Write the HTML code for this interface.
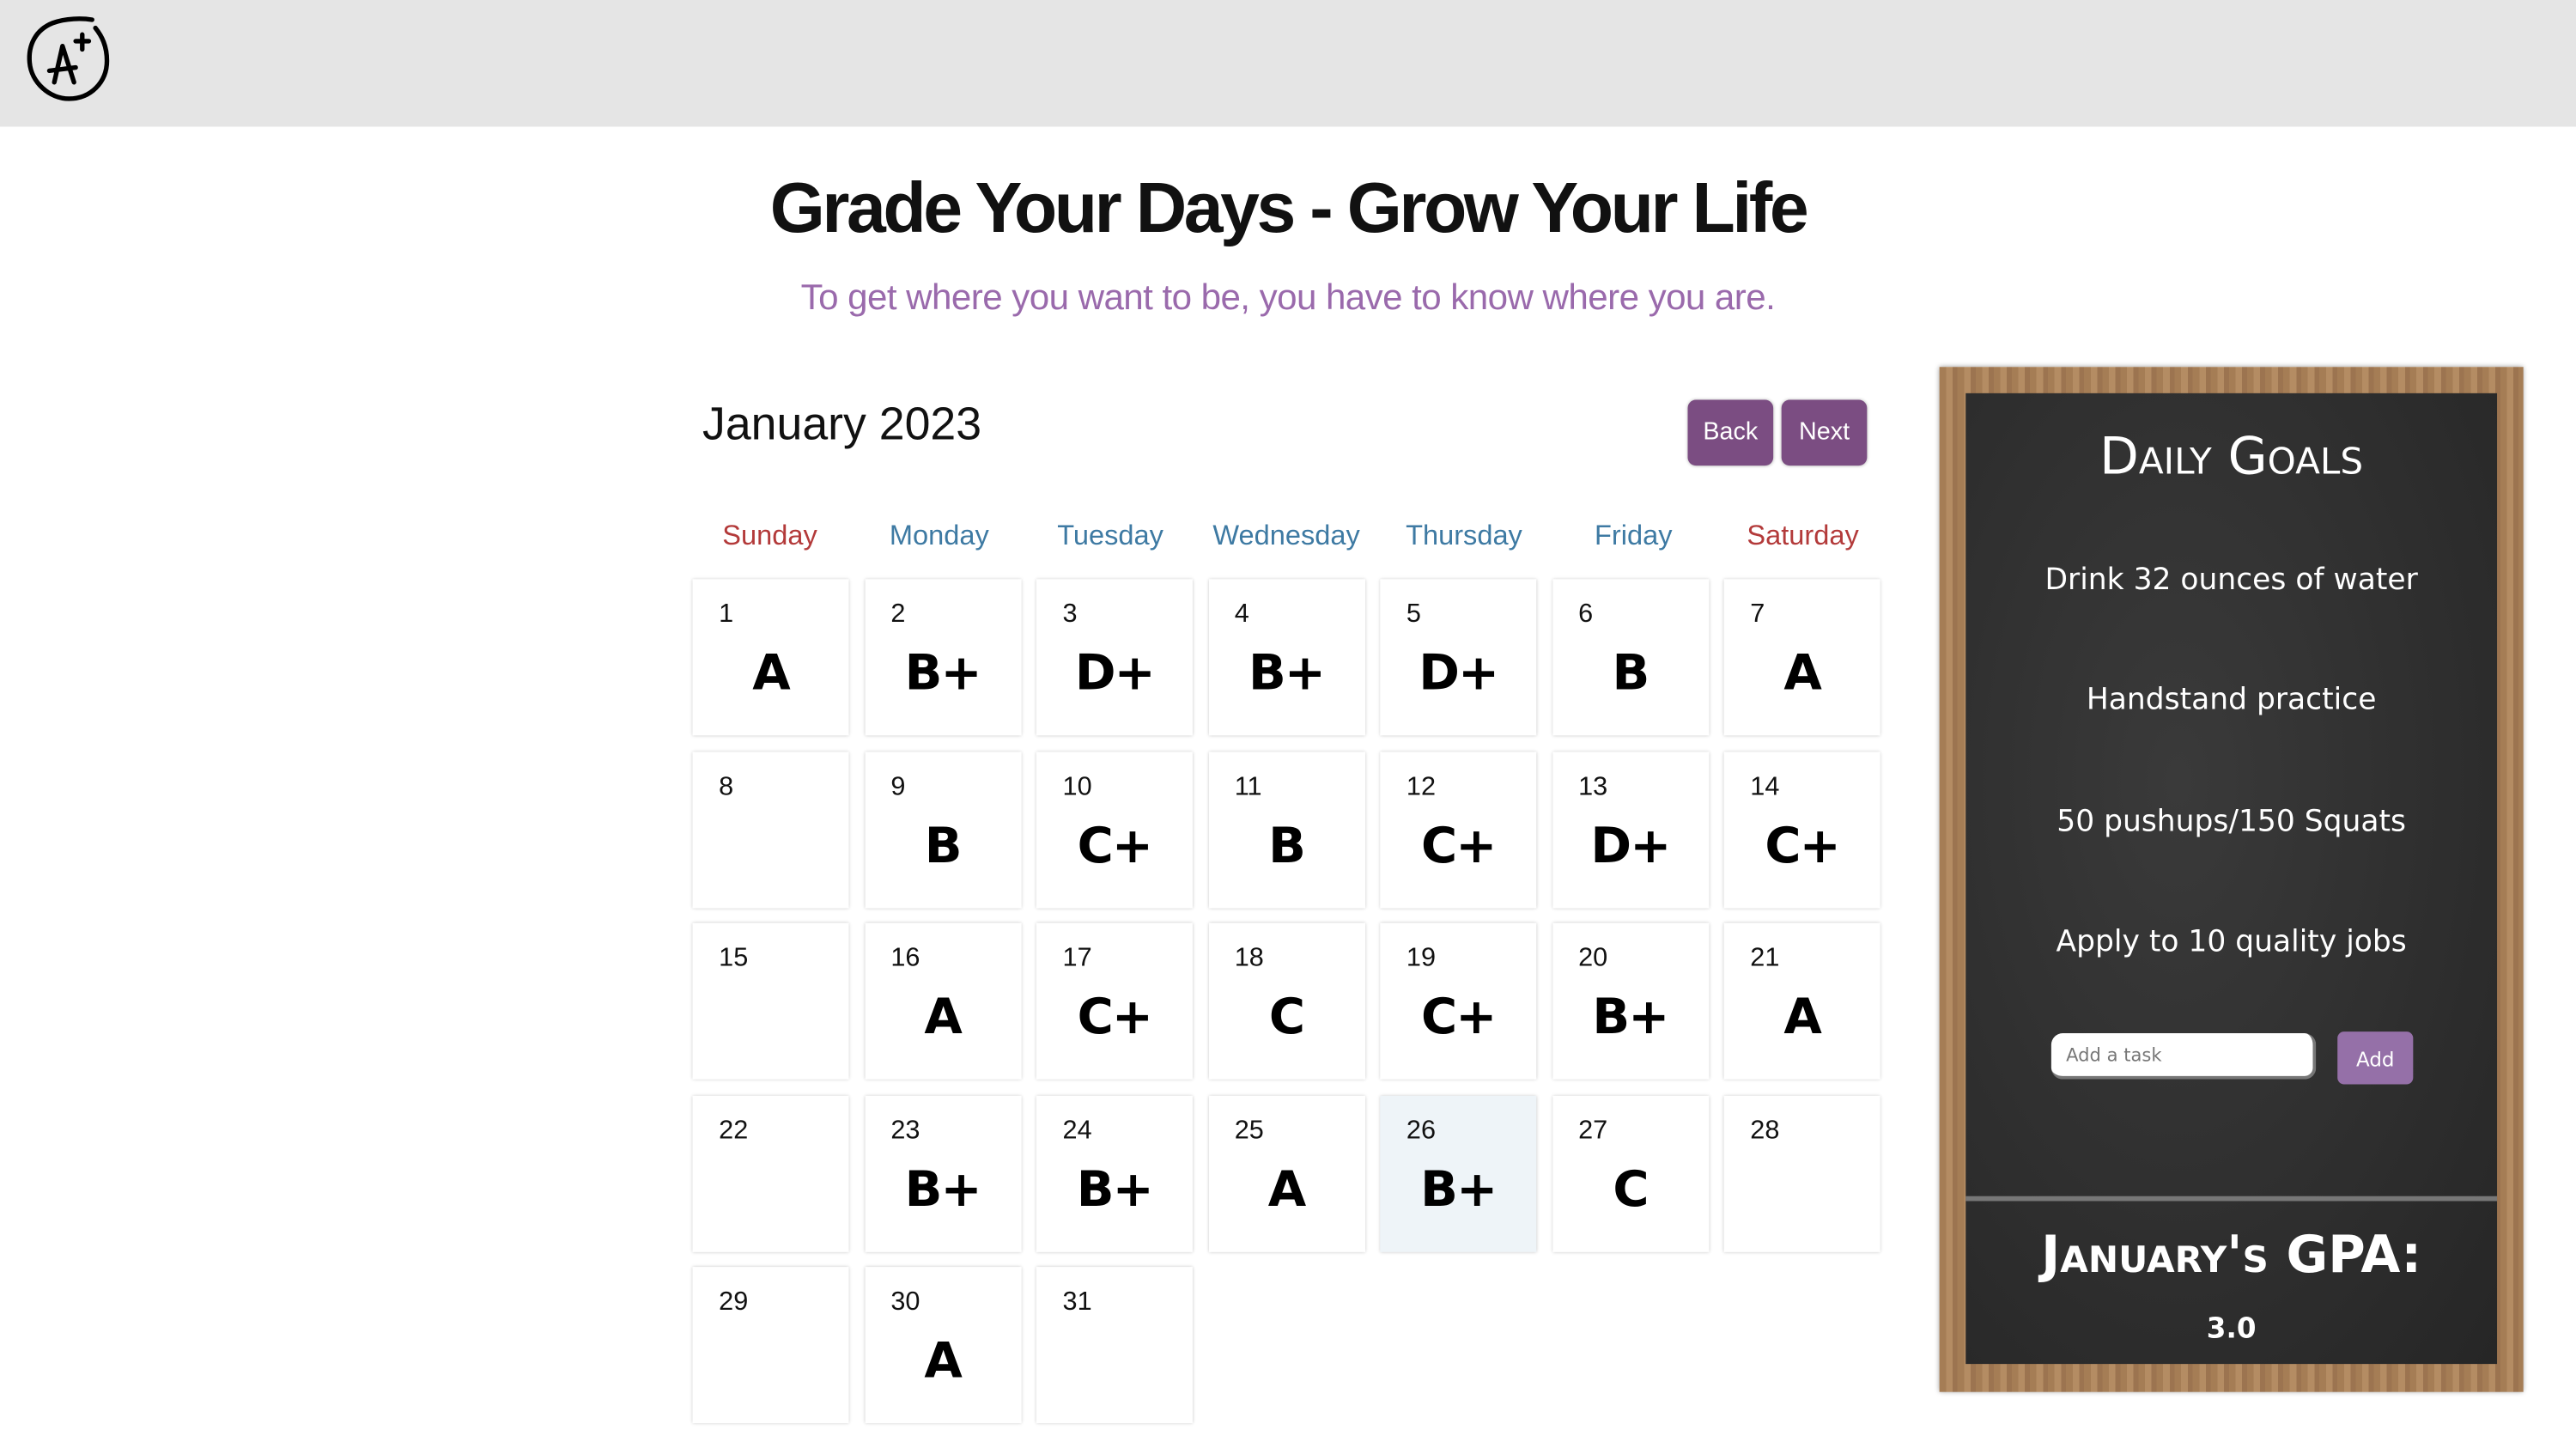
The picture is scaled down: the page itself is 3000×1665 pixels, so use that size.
<!DOCTYPE html>
<html><head><meta charset="utf-8"><style>
html,body{margin:0;padding:0;width:3000px;height:1662px;overflow:hidden;background:#fff;}
#w{position:absolute;left:0;top:0;width:1566px;height:869px;transform:scale(1.9157);transform-origin:0 0;font-family:"Liberation Sans",sans-serif;}
.hdr{position:absolute;left:0;top:0;width:1566px;height:77px;background:#e5e5e5;}
.t{position:absolute;left:0;width:1566px;text-align:center;}
.cell{position:absolute;width:95px;height:95px;background:#fff;box-shadow:0 0 2px rgba(0,0,0,.25);}
.cell .n{position:absolute;left:16px;top:13px;font-size:16px;color:#111;}
.cell .g{position:absolute;left:0;width:95px;top:40px;text-align:center;font-family:"DejaVu Sans",sans-serif;font-weight:bold;font-size:30px;color:#000;letter-spacing:-1px;}
.dh{position:absolute;top:316px;font-size:17px;width:104px;text-align:center;}
.btn{position:absolute;top:243px;height:40px;background:#7b4d82;color:#fff;border-radius:5px;font-size:15px;line-height:40px;text-align:center;box-shadow:0 0 2px rgba(0,0,0,.3);}
.ch{position:absolute;left:1195px;width:323px;text-align:center;color:#fff;font-family:"DejaVu Sans",sans-serif;}
</style></head><body><div id="w">
<div class="hdr"></div>
<svg style="position:absolute;left:0;top:0" width="80" height="77" viewBox="0 0 80 77">
<path d="M56 12 C 50 11, 40 11, 32 14 C 22 18, 17 27, 18 38 C 19 50, 30 60, 42 60 C 55 60, 65 50, 65 37 C 65 28, 62 22, 58 17" fill="none" stroke="#000" stroke-width="2.8" stroke-linecap="round"/>
<path d="M33 50 L38 28 L45 50 M30 43 L46 41 M50 21 L50 30 M46 25 L54 25" fill="none" stroke="#000" stroke-width="2.8" stroke-linecap="round" stroke-linejoin="round"/>
</svg>
<div class="t" style="top:103px;font-size:43px;font-weight:bold;letter-spacing:-1.8px;color:#111;">Grade Your Days - Grow Your Life</div>
<div class="t" style="top:168px;font-size:22px;color:#9a6aac;letter-spacing:-0.3px;">To get where you want to be, you have to know where you are.</div>
<div style="position:absolute;left:427px;top:242px;font-size:28px;color:#111;">January 2023</div>
<div class="btn" style="left:1026px;width:52px;">Back</div>
<div class="btn" style="left:1083px;width:52px;">Next</div>
<div class="dh" style="left:416px;color:#b33a3a">Sunday</div>
<div class="dh" style="left:519px;color:#3e7aa3">Monday</div>
<div class="dh" style="left:623px;color:#3e7aa3">Tuesday</div>
<div class="dh" style="left:730px;color:#3e7aa3">Wednesday</div>
<div class="dh" style="left:838px;color:#3e7aa3">Thursday</div>
<div class="dh" style="left:941px;color:#3e7aa3">Friday</div>
<div class="dh" style="left:1044px;color:#b33a3a">Saturday</div>
<div id="cal"></div>
<div style="position:absolute;left:1179px;top:223px;width:355px;height:623px;background:repeating-linear-gradient(90deg,#a57d55 0 4px,#b48c63 4px 8px,#9c7450 8px 11px);box-shadow:0 0 3px rgba(0,0,0,.4);"></div>
<div style="position:absolute;left:1195px;top:239px;width:323px;height:590px;background:radial-gradient(ellipse at 40% 40%,#3a3a3a,#262626);"></div>
<div style="position:absolute;left:1195px;top:727px;width:323px;height:3px;background:#777;"></div>
<div class="ch" style="top:260px;font-size:31px;font-variant:small-caps;">Daily Goals</div>
<div class="ch" style="top:342px;font-size:18px;">Drink 32 ounces of water</div>
<div class="ch" style="top:415px;font-size:18px;">Handstand practice</div>
<div class="ch" style="top:489px;font-size:18px;">50 pushups/150 Squats</div>
<div class="ch" style="top:562px;font-size:18px;">Apply to 10 quality jobs</div>
<div style="position:absolute;left:1247px;top:628px;width:161px;height:28px;background:#fff;border-radius:7px;border-right:2px solid #777;border-bottom:2px solid #777;font-size:11px;color:#777;line-height:28px;padding-left:9px;box-sizing:border-box;font-family:'DejaVu Sans',sans-serif;">Add a task</div>
<div style="position:absolute;left:1421px;top:627px;width:46px;height:32px;background:#9570a8;border-radius:4px;color:#fff;font-size:12px;line-height:34px;text-align:center;font-family:'DejaVu Sans',sans-serif;">Add</div>
<div class="ch" style="top:745px;font-size:31px;font-weight:bold;font-variant:small-caps;">January's GPA:</div>
<div class="ch" style="top:798px;font-size:17px;font-weight:bold;">3.0</div>
<script>
var g=["A","B+","D+","B+","D+","B","A","","B","C+","B","C+","D+","C+","","A","C+","C","C+","B+","A","","B+","B+","A","B+","C","","","A",""];
var h="";for(var i=0;i<31;i++){var c=i%7,r=Math.floor(i/7);var x=421+c*104.5,y=352+r*104.5;
h+='<div class="cell" style="left:'+x+'px;top:'+y+'px;'+(i==25?'background:#eef4f8;':'')+'"><div class="n">'+(i+1)+'</div><div class="g">'+g[i]+'</div></div>';}
document.getElementById("cal").innerHTML=h;
</script>
</div></body></html>
